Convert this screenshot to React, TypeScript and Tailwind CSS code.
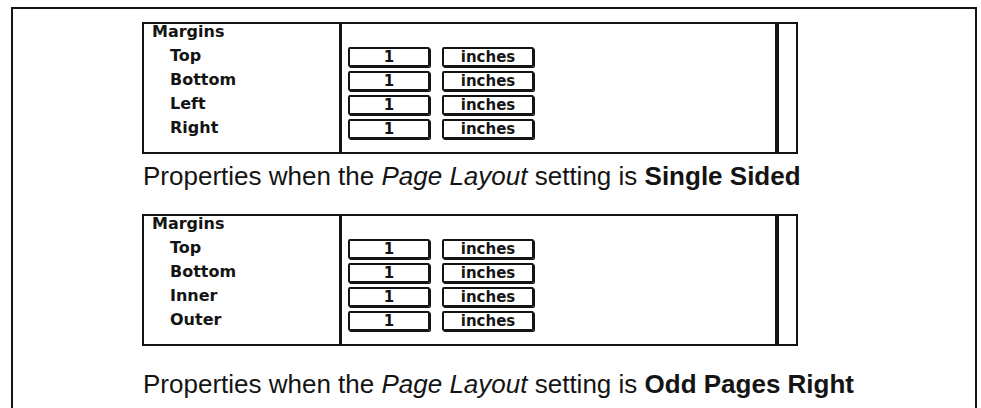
// Page margin properties, two layouts
const ink = 'border-[#141414]';

function MarginPanel({ labels }: { labels: string[] }) {
  return (
    <div className={`flex h-[132px] w-[656px] border-2 ${ink} bg-white`}>
      {/* labels */}
      <div className="flex w-[195px] flex-col pl-[8px] font-['DejaVu_Sans',sans-serif] text-[16px] font-bold text-[#141414]">
        <div className="h-[20px] leading-[16px]">Margins</div>
        {labels.map((l) => (
          <div key={l} className="flex h-[24px] items-center pl-[18px] leading-[18px]">
            {l}
          </div>
        ))}
      </div>
      <div className="w-[3px] bg-[#141414]" />

      {/* values */}
      <div className="flex flex-1 flex-col pl-[6px] pt-[21px] font-['DejaVu_Sans',sans-serif] text-[15px] font-bold text-[#141414]">
        {labels.map((l) => (
          <div key={l} className="flex h-[24px] items-center gap-[12px]">
            <div className={`flex h-[20px] w-[82px] items-center justify-center rounded-[2px] border-2 ${ink} leading-none shadow-[1px_1px_0_#141414]`}>
              1
            </div>
            <div className={`flex h-[20px] w-[92px] items-center justify-center rounded-[2px] border-2 ${ink} leading-none shadow-[1px_1px_0_#141414]`}>
              inches
            </div>
          </div>
        ))}
      </div>
      <div className="w-[4px] bg-[#141414]" />
      <div className="w-[17px]" />
    </div>
  );
}

function Caption({ setting }: { setting: string }) {
  return (
    <p className="pl-[1px] font-['Liberation_Sans',Arial,sans-serif] text-[26px] leading-[30px] text-[#141414]">
      Properties when the <i>Page Layout</i> setting is <b>{setting}</b>
    </p>
  );
}

export default function App() {
  return (
    <div className="h-[408px] w-[981px] overflow-hidden bg-white">
      <div className={`ml-[11px] mt-[7px] h-[420px] w-[966px] border-2 border-b-0 ${ink} pl-[129px] pt-[13px]`}>
        <MarginPanel labels={['Top', 'Bottom', 'Left', 'Right']} />
        <div className="mt-[7px]">
          <Caption setting="Single Sided" />
        </div>
        <div className="mt-[23px]">
          <MarginPanel labels={['Top', 'Bottom', 'Inner', 'Outer']} />
        </div>
        <div className="mt-[23px]">
          <Caption setting="Odd Pages Right" />
        </div>
      </div>
    </div>
  );
}
